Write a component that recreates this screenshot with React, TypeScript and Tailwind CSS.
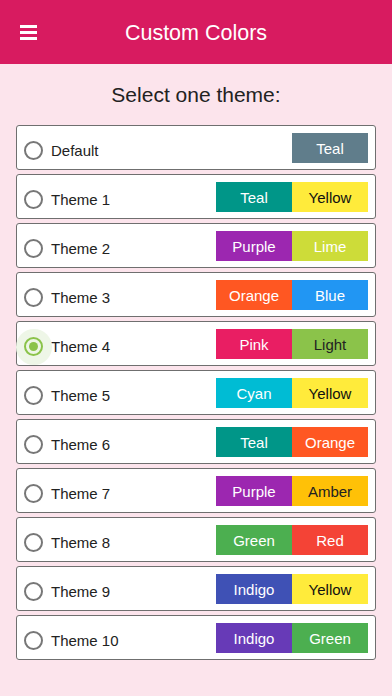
import { useState } from "react";

type Swatch = { name: string; bg: string; fg: string };

type Theme = {
  id: string;
  label: string;
  swatches: Swatch[];
};

const themes: Theme[] = [
  { id: "default", label: "Default", swatches: [{ name: "Teal", bg: "bg-[#607d8b]", fg: "text-white" }] },
  {
    id: "t1",
    label: "Theme 1",
    swatches: [
      { name: "Teal", bg: "bg-[#009688]", fg: "text-white" },
      { name: "Yellow", bg: "bg-[#ffeb3b]", fg: "text-[#111]" },
    ],
  },
  {
    id: "t2",
    label: "Theme 2",
    swatches: [
      { name: "Purple", bg: "bg-[#9c27b0]", fg: "text-white" },
      { name: "Lime", bg: "bg-[#cddc39]", fg: "text-white" },
    ],
  },
  {
    id: "t3",
    label: "Theme 3",
    swatches: [
      { name: "Orange", bg: "bg-[#ff5722]", fg: "text-white" },
      { name: "Blue", bg: "bg-[#2196f3]", fg: "text-white" },
    ],
  },
  {
    id: "t4",
    label: "Theme 4",
    swatches: [
      { name: "Pink", bg: "bg-[#e91e63]", fg: "text-white" },
      { name: "Light", bg: "bg-[#8bc34a]", fg: "text-[#222]" },
    ],
  },
  {
    id: "t5",
    label: "Theme 5",
    swatches: [
      { name: "Cyan", bg: "bg-[#00bcd4]", fg: "text-white" },
      { name: "Yellow", bg: "bg-[#ffeb3b]", fg: "text-[#111]" },
    ],
  },
  {
    id: "t6",
    label: "Theme 6",
    swatches: [
      { name: "Teal", bg: "bg-[#009688]", fg: "text-white" },
      { name: "Orange", bg: "bg-[#ff5722]", fg: "text-white" },
    ],
  },
  {
    id: "t7",
    label: "Theme 7",
    swatches: [
      { name: "Purple", bg: "bg-[#9c27b0]", fg: "text-white" },
      { name: "Amber", bg: "bg-[#ffc107]", fg: "text-[#222]" },
    ],
  },
  {
    id: "t8",
    label: "Theme 8",
    swatches: [
      { name: "Green", bg: "bg-[#4caf50]", fg: "text-white" },
      { name: "Red", bg: "bg-[#f44336]", fg: "text-white" },
    ],
  },
  {
    id: "t9",
    label: "Theme 9",
    swatches: [
      { name: "Indigo", bg: "bg-[#3f51b5]", fg: "text-white" },
      { name: "Yellow", bg: "bg-[#ffeb3b]", fg: "text-[#111]" },
    ],
  },
  {
    id: "t10",
    label: "Theme 10",
    swatches: [
      { name: "Indigo", bg: "bg-[#673ab7]", fg: "text-white" },
      { name: "Green", bg: "bg-[#4caf50]", fg: "text-white" },
    ],
  },
];

const Radio = ({ checked }: { checked: boolean }) =>
  checked ? (
    <div className="relative flex h-[19px] w-[19px] items-center justify-center">
      <div className="absolute left-1/2 top-1/2 h-[36px] w-[36px] -translate-x-1/2 -translate-y-1/2 rounded-full bg-[#eef6e7]" />
      <div className="relative flex h-[19px] w-[19px] items-center justify-center rounded-full border-2 border-[#8bc34a]">
        <div className="h-[9px] w-[9px] rounded-full bg-[#8bc34a]" />
      </div>
    </div>
  ) : (
    <div className="h-[19px] w-[19px] rounded-full border-2 border-[#777]" />
  );

const App = () => {
  const [selected, setSelected] = useState("t4");

  return (
    <div
      className="min-h-[696px] bg-[#fce4ec]"
      style={{ fontFamily: '"Liberation Sans", Arial, sans-serif' }}
    >
      <header className="relative flex h-[64px] items-center justify-center bg-[#d81b60]">
        <button className="absolute left-[20px] top-[25px] flex w-[17px] flex-col gap-[3px]">
          <span className="h-[3px] w-full bg-white" />
          <span className="h-[3px] w-full bg-white" />
          <span className="h-[3px] w-full bg-white" />
        </button>
        <h1 className="pt-[2px] text-[21.5px] text-white">Custom Colors</h1>
      </header>

      <h2 className="mt-[19px] text-center text-[21px] leading-[24px] text-[#222]">
        Select one theme:
      </h2>

      <div className="mt-[18px] flex flex-col gap-[4px] px-[16px]">
        {themes.map((theme) => (
          <div
            key={theme.id}
            onClick={() => setSelected(theme.id)}
            className="flex h-[45px] cursor-pointer items-center rounded-[3px] border border-[#6f6f6f] bg-white pl-[7px] pr-[7px]"
          >
            <div className="flex flex-1 items-center gap-[8px] pt-[6px]">
              <Radio checked={selected === theme.id} />
              <span className="text-[15px] leading-[18px] text-[#222]">{theme.label}</span>
            </div>
            <div className="flex">
              {theme.swatches.map((s, i) => (
                <div
                  key={i}
                  className={`flex h-[30px] w-[76px] items-center justify-center pt-[3px] text-[15px] ${s.bg} ${s.fg}`}
                >
                  {s.name}
                </div>
              ))}
            </div>
          </div>
        ))}
      </div>
    </div>
  );
};

export default App;
